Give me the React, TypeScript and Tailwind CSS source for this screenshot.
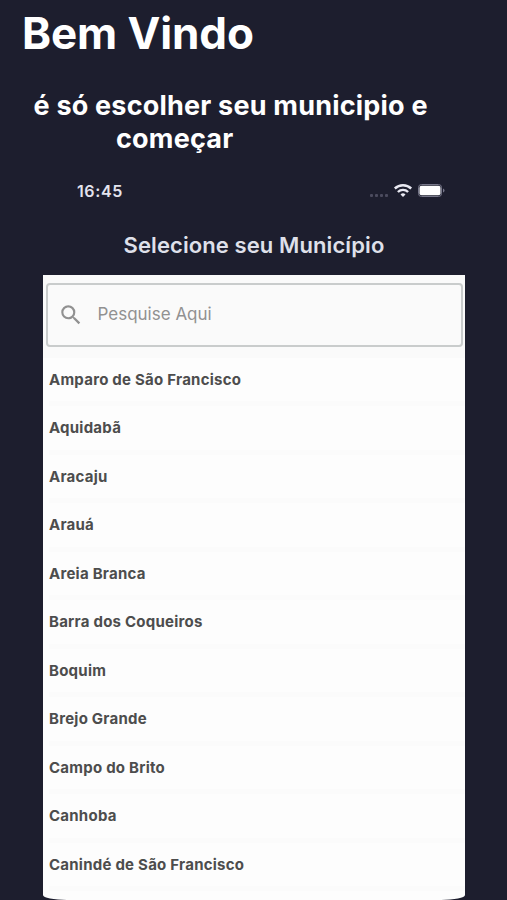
const municipalities = [
  "Amparo de São Francisco",
  "Aquidabã",
  "Aracaju",
  "Arauá",
  "Areia Branca",
  "Barra dos Coqueiros",
  "Boquim",
  "Brejo Grande",
  "Campo do Brito",
  "Canhoba",
  "Canindé de São Francisco",
];

function StatusIcons() {
  return (
    <svg width="78" height="18" viewBox="0 0 78 18" aria-hidden="true">
      <g fill="#4b4b5e">
        <rect x="2" y="12" width="3" height="3" rx="1" />
        <rect x="7" y="12" width="3" height="3" rx="1" />
        <rect x="12" y="12" width="3" height="3" rx="1" />
        <rect x="17" y="12" width="3" height="3" rx="1" />
      </g>
      <g fill="none" stroke="#e9e9f2" strokeWidth="2.4">
        <path d="M26.800 6.500a12 12 0 0 1 16.400 0" />
        <path d="M29.900 10a7.300 7.300 0 0 1 10.200 0" />
      </g>
      <path d="M35 15l-2.500-2.600a3.600 3.600 0 0 1 5 0z" fill="#e9e9f2" />
      <rect x="50.500" y="2.500" width="23" height="12" rx="3" fill="none" stroke="#77778a" />
      <rect x="51.500" y="3.800" width="21" height="9.400" rx="2" fill="#fff" />
      <path d="M75 6.500v4q1.500-.5 1.500-2t-1.500-2z" fill="#77778a" />
    </svg>
  );
}

export default function App() {
  return (
    <main className="flex h-[900px] w-[507px] flex-col overflow-hidden bg-[#1d1e2e] font-['Inter',sans-serif]">
      <h1 className="h-[89px] pt-[6px] pl-[22px] text-[44px] leading-[54px] font-bold tracking-[-0.1px] whitespace-nowrap text-white">
        Bem Vindo
      </h1>
      <div className="h-[91px] text-[27px] leading-[33px] font-bold tracking-[0.2px] whitespace-nowrap text-white">
        <p className="pl-[33.5px]">é só escolher seu municipio e</p>
        <p className="pl-[116px]">começar</p>
      </div>
      <div className="flex h-[22px] items-center justify-between pr-[61px] pl-[77px]">
        <span className="text-[16px] leading-[22px] font-semibold tracking-[0.6px] text-[#e4e4ee]">16:45</span>
        <StatusIcons />
      </div>
      <h2 className="h-[73px] pt-[29px] pl-[123.5px] text-[22px] leading-[28px] font-semibold tracking-[0.1px] whitespace-nowrap text-[#dfe0ea]">
        Selecione seu Município
      </h2>
      <section className="ml-[43px] flex h-[625px] w-[422px] flex-col rounded-b-[24px_5px] bg-[#fdfdfd]">
        <div className="bg-[#fafafa] px-[2.5px] pt-[8px] pb-[10.5px]">
          <div className="flex h-[64px] items-center rounded-[4px] border-2 border-[#c9cccc] bg-[#fafafa] pl-[10.5px] text-[#919191]">
            <svg width="26" height="26" viewBox="0 0 24 24" fill="currentColor" aria-hidden="true">
              <path d="M15.500 14h-.79l-.28-.27A6.470 6.470 0 0 0 16 9.500 6.500 6.500 0 1 0 9.500 16c1.610 0 3.090-.59 4.230-1.570l.27.280v.79l5 4.990L20.490 19zm-6 0C7.010 14 5 11.990 5 9.500S7.010 5 9.500 5 14 7.010 14 9.500 11.990 14 9.500 14" />
            </svg>
            <span className="pb-[2px] pl-[13.5px] text-[17px] leading-[22px]">Pesquise Aqui</span>
          </div>
        </div>
        <ul className="pl-[6px]">
          {municipalities.map((name) => (
            <li
              key={name}
              className="flex h-[48.53px] items-center border-b-[5px] border-[#fbfbfb] pt-[0.8px] text-[15px] leading-[20px] font-bold tracking-[0.24px] text-[#4d4d4d]"
            >
              {name}
            </li>
          ))}
        </ul>
      </section>
    </main>
  );
}
